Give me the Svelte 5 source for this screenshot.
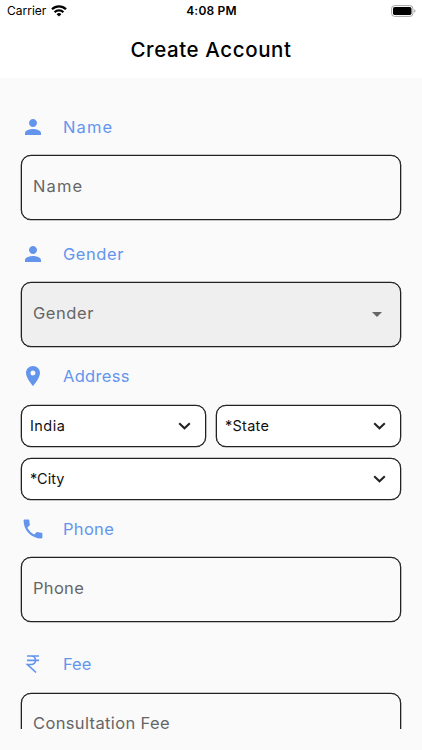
<script lang="ts">
  let name = $state('');
  let phone = $state('');
  let fee = $state('');
</script>

{#snippet person()}
  <svg class="icon" viewBox="0 0 24 24"><path d="M12 12c2.200 0 4-1.800 4-4s-1.800-4-4-4-4 1.800-4 4 1.800 4 4 4zm0 2c-2.700 0-8 1.300-8 4v2h16v-2c0-2.700-5.300-4-8-4z"/></svg>
{/snippet}

{#snippet chevron()}
  <svg class="chevron" width="13" height="8" viewBox="0 0 13 8"><path d="M1.200 1.200 6.500 6.300l5.300-5.100" /></svg>
{/snippet}

<div class="screen">
  <div class="status">
    <div class="carrier">
      <span>Carrier</span>
      <svg width="16" height="12" viewBox="0 0 16 12">
        <g fill="none" stroke="#000" stroke-width="2.300">
          <path d="M1 4.300a10 10 0 0 1 14 0" />
          <path d="M3.600 7.200a6.300 6.300 0 0 1 8.800 0" />
        </g>
        <path d="M8 11.600 5.600 9.200a3.300 3.300 0 0 1 4.800 0z" />
      </svg>
    </div>
    <div class="time">4:08 PM</div>
    <svg class="battery" width="25" height="12" viewBox="0 0 25 12">
      <rect x=".6" y=".6" width="21.300" height="10.800" rx="3" fill="#fff" stroke="#a5a5a5" />
      <rect x="2" y="2" width="18.500" height="8" rx="1.700" />
      <path d="M23.300 4.300v3.400q1.200-.5 1.200-1.700t-1.200-1.700" fill="#999" />
    </svg>
  </div>
  <header><h1>Create Account</h1></header>

  <main>
    <div class="label name">{@render person()}<span class="t-name">Name</span></div>
    <input class="field t-name" aria-label="Name" placeholder="Name" bind:value={name} />

    <div class="label gender">{@render person()}<span class="t-gender">Gender</span></div>
    <button class="field picker">
      <span class="t-gender">Gender</span>
      <svg width="10" height="5" viewBox="0 0 10 5"><path d="M0 0h10L5 5z" fill="#666" /></svg>
    </button>

    <div class="label address">
      <svg class="icon" viewBox="0 0 24 24"><path d="M12 2C8.100 2 5 5.100 5 9c0 5.200 7 13 7 13s7-7.800 7-13c0-3.900-3.100-7-7-7zm0 9.500a2.500 2.500 0 1 1 0-5 2.500 2.500 0 0 1 0 5z"/></svg>
      <span class="t-address">Address</span>
    </div>
    <div class="selects">
      <button class="select"><span class="t-india">India</span>{@render chevron()}</button>
      <button class="select"><span class="t-state">*State</span>{@render chevron()}</button>
      <button class="select wide"><span class="t-city">*City</span>{@render chevron()}</button>
    </div>

    <div class="label phone">
      <svg class="icon" viewBox="0.500 0.500 23 23"><path d="M20 15.500c-1.200 0-2.400-.2-3.600-.6-.3-.1-.7 0-1 .2l-2.200 2.200c-2.800-1.400-5.100-3.800-6.600-6.600l2.200-2.200c.3-.3.400-.7.200-1-.3-1.100-.5-2.300-.5-3.500 0-.6-.4-1-1-1H4c-.6 0-1 .4-1 1 0 9.400 7.600 17 17 17 .6 0 1-.4 1-1v-3.500c0-.6-.4-1-1-1z"/></svg>
      <span class="t-phone">Phone</span>
    </div>
    <input class="field t-phone" type="tel" aria-label="Phone" placeholder="Phone" bind:value={phone} />

    <div class="label fee">
      <svg class="icon" viewBox="0 0 24 24"><path d="M6 4h12M6 8.300h12M6 4h4c6 0 6 8.500 0 8.500H6.500L15 20.500" fill="none" stroke="#6495ed" stroke-width="1.700"/></svg>
      <span class="t-fee">Fee</span>
    </div>
    <input class="field t-consult" aria-label="Consultation Fee" placeholder="Consultation Fee" bind:value={fee} />
  </main>
</div>

<style>
  :global(body) { background: #fafafa; }

  .screen {
    height: 750px;
    overflow: hidden;
    background: #fafafa;
    font-family: Inter, "Liberation Sans", sans-serif;
    color: #111;
  }
  .status {
    height: 22px;
    padding: 0 6px 1px 7px;
    box-sizing: border-box;
    display: grid;
    grid-template-columns: 1fr auto 1fr;
    align-items: center;
    background: #fff;
    font-size: 12px;
    color: #000;
  }
  .carrier { display: flex; align-items: center; gap: 5px; }
  .time { font-weight: 600; letter-spacing: 0.2px; }
  .battery { justify-self: end; }

  header {
    height: 56px;
    padding-bottom: 2px;
    box-sizing: border-box;
    display: flex; align-items: center; justify-content: center;
    background: #fff;
  }
  h1 { margin: 0; font-size: 20.5px; font-weight: 500; letter-spacing: 0.6px; color: #000; }

  main {
    height: 651px;
    padding: 0 21px;
    overflow: hidden;
  }

  .label {
    display: flex; align-items: center; gap: 18px;
    height: 24px;
    font-size: 16.5px;
    color: #6495ed;
  }
  .icon { width: 24px; height: 24px; fill: #6495ed; }
  .label.name { margin: 37px 0 16px; }
  .label.gender { margin: 22px 0 16px; }
  .label.address { margin: 17px 0; }
  .label.phone { margin: 17px 0 16px; }
  .label.fee { margin: 30px 0 17px; }

  .field {
    display: flex; align-items: center; justify-content: space-between;
    width: 100%;
    height: 65px;
    box-sizing: border-box;
    padding: 0 11px 4px;
    border: 1px solid #222;
    border-radius: 10px;
    box-shadow: 0 0 0 0.3px #222;
    background: #fafafa;
    font-family: inherit;
    font-size: 16.5px;
    color: #666;
    outline: none;
  }
  .field::placeholder { color: #666; opacity: 1; }
  .picker { padding-right: 18px; background: #efefef; }
  .picker svg { margin-top: 3px; }

  .selects {
    display: grid;
    grid-template-columns: 1fr 1fr;
    gap: 11px 10px;
  }
  .select {
    display: flex; align-items: center; justify-content: space-between;
    height: 42px;
    padding: 0 14px 1px 8px;
    border: 1px solid #222;
    border-radius: 10px;
    box-shadow: 0 0 0 0.3px #222;
    background: #fff;
    font-family: inherit;
    font-size: 14.5px;
    color: #111;
  }
  .wide { grid-column: 1 / -1; }
  .chevron path { fill: none; stroke: #222; stroke-width: 2; }

  .t-name { letter-spacing: 1.1px; }
  .t-gender { letter-spacing: 0.55px; }
  .t-address { letter-spacing: 0.3px; }
  .t-phone { letter-spacing: 0.3px; }
  .t-fee { letter-spacing: 0; }
  .t-consult { letter-spacing: 0.36px; padding-bottom: 5px; }
  .t-india { letter-spacing: 0.45px; }
  .t-state { letter-spacing: 0.25px; }
  .t-city { letter-spacing: 0; }
</style>
